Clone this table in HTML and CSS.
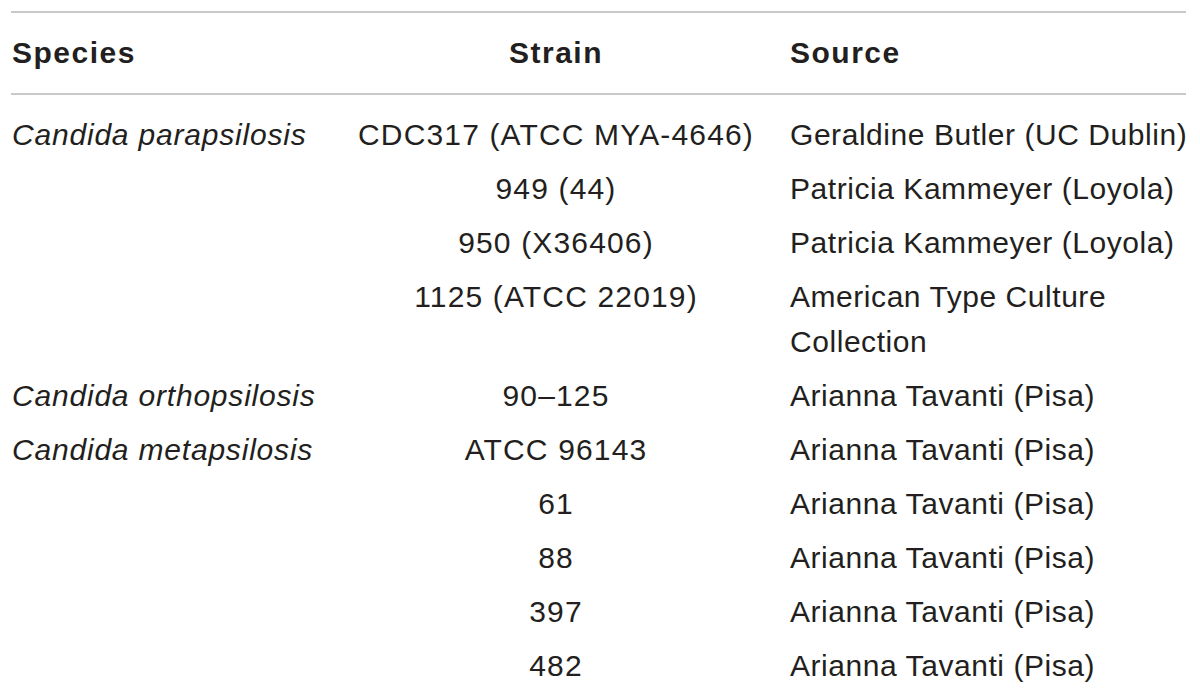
FILE: index.html
```html
<!DOCTYPE html>
<html>
<head>
<meta charset="utf-8">
<link rel="stylesheet" href="styles.css">
</head>
<body>
<table class="strains">
  <thead>
    <tr>
      <th class="c-species">Species</th>
      <th class="c-strain">Strain</th>
      <th class="c-source">Source</th>
    </tr>
  </thead>
  <tbody>
    <tr class="first">
      <td class="c-species"><i>Candida parapsilosis</i></td>
      <td class="c-strain">CDC317 (ATCC MYA-4646)</td>
      <td class="c-source">Geraldine Butler (UC Dublin)</td>
    </tr>
    <tr>
      <td class="c-species"></td>
      <td class="c-strain">949 (44)</td>
      <td class="c-source">Patricia Kammeyer (Loyola)</td>
    </tr>
    <tr>
      <td class="c-species"></td>
      <td class="c-strain">950 (X36406)</td>
      <td class="c-source">Patricia Kammeyer (Loyola)</td>
    </tr>
    <tr>
      <td class="c-species"></td>
      <td class="c-strain">1125 (ATCC 22019)</td>
      <td class="c-source">American Type Culture<br>Collection</td>
    </tr>
    <tr>
      <td class="c-species"><i>Candida orthopsilosis</i></td>
      <td class="c-strain">90–125</td>
      <td class="c-source">Arianna Tavanti (Pisa)</td>
    </tr>
    <tr>
      <td class="c-species"><i>Candida metapsilosis</i></td>
      <td class="c-strain">ATCC 96143</td>
      <td class="c-source">Arianna Tavanti (Pisa)</td>
    </tr>
    <tr>
      <td class="c-species"></td>
      <td class="c-strain">61</td>
      <td class="c-source">Arianna Tavanti (Pisa)</td>
    </tr>
    <tr>
      <td class="c-species"></td>
      <td class="c-strain">88</td>
      <td class="c-source">Arianna Tavanti (Pisa)</td>
    </tr>
    <tr>
      <td class="c-species"></td>
      <td class="c-strain">397</td>
      <td class="c-source">Arianna Tavanti (Pisa)</td>
    </tr>
    <tr>
      <td class="c-species"></td>
      <td class="c-strain">482</td>
      <td class="c-source">Arianna Tavanti (Pisa)</td>
    </tr>
  </tbody>
</table>
</body>
</html>
```

FILE: styles.css
```css
html, body {
  margin: 0;
  padding: 0;
  background: #ffffff;
}

body {
  font-family: "Liberation Sans", Arial, Helvetica, sans-serif;
  font-size: 30px;
  line-height: 45px;
  color: #231f20;
}

.strains {
  margin: 11px 0 0 11px;
  width: 1175px;
  border-collapse: collapse;
  table-layout: fixed;
  border-top: 2px solid #c9c9c9;
}

.strains th,
.strains td {
  padding: 4px 0 5px 0;
  vertical-align: top;
  white-space: nowrap;
}

.strains thead th {
  padding-top: 17px;
  padding-bottom: 18px;
  font-weight: bold;
  letter-spacing: 1.5px;
  border-bottom: 2px solid #c9c9c9;
}

.strains tbody tr.first td {
  padding-top: 17px;
}

.c-species {
  width: 330px;
  text-align: left;
  padding-left: 1px !important;
}

.c-strain {
  width: 428px;
  text-align: center;
}

.c-source {
  text-align: left;
  padding-left: 20px !important;
}

.strains tbody .c-species {
  letter-spacing: 0.8px;
}

.strains tbody .c-strain {
  letter-spacing: 1.15px;
}

.strains tbody .c-source {
  letter-spacing: 0.55px;
}
```
